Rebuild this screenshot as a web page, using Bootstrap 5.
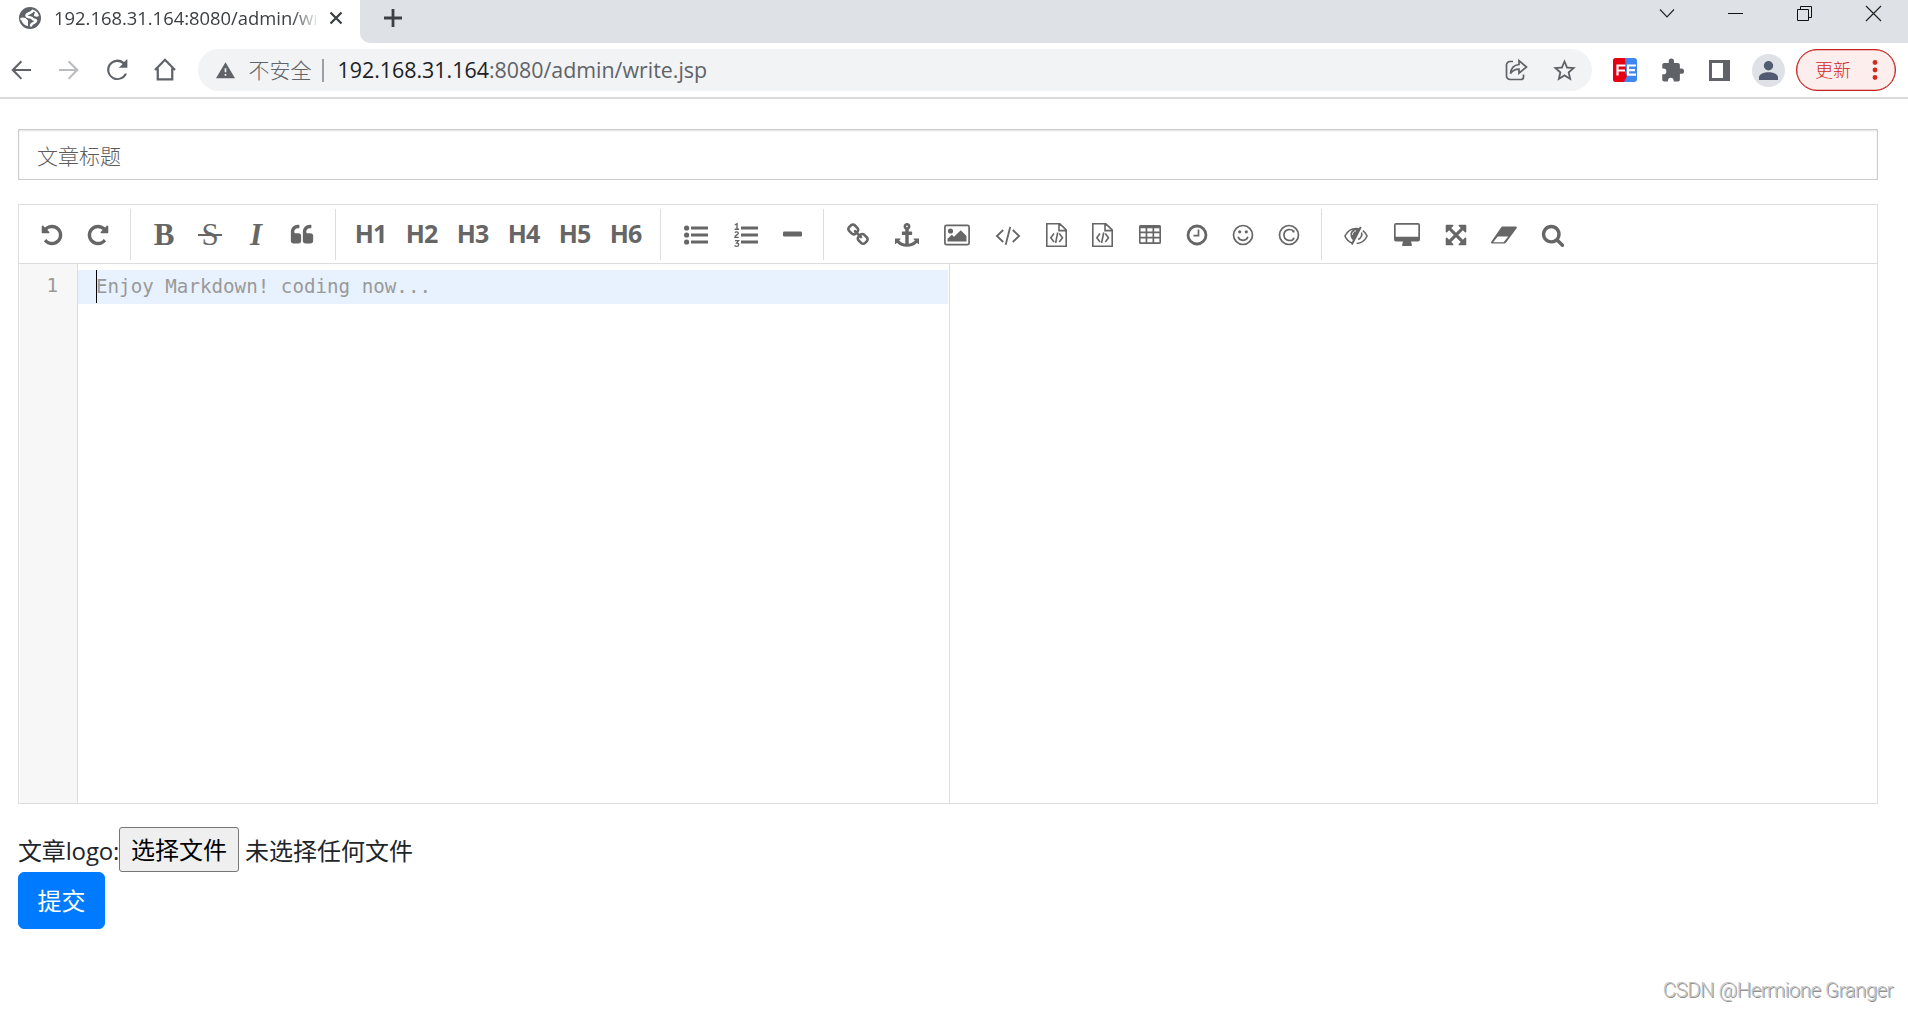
<!DOCTYPE html>
<html lang="zh-CN">
<head>
<meta charset="utf-8">
<meta name="viewport" content="width=device-width, initial-scale=1">
<title>192.168.31.164:8080/admin/write.jsp</title>
<link href="https://cdn.jsdelivr.net/npm/bootstrap@5.3.0/dist/css/bootstrap.min.css" rel="stylesheet">
<style>
  body { font-family: "Open Sans", "Noto Sans CJK SC", sans-serif; color: #212529; background: #fff; height: 1010px; overflow: hidden; font-size: 24px; }
  svg { display: block; flex: none; overflow: visible; }
  .tabstrip { height: 43px; background: #fff; }
  .tab-active { width: 360px; height: 36px; padding-left: 18px; }
  .tab-title { width: 262px; margin-left: 12px; font-size: 18.4px; color: #3c4043; white-space: nowrap; overflow: hidden; line-height: 36px;
    -webkit-mask-image: linear-gradient(90deg, #000 238px, transparent 266px); mask-image: linear-gradient(90deg, #000 238px, transparent 266px); }
  .tab-close { margin-left: 9px; }
  .tab-rest { background: #dee1e6; border-bottom-left-radius: 10px; padding-left: 24px; }
  .win-btn { width: 69px; height: 27px; }
  .navrow { height: 56px; border-bottom: 2px solid #d9dadc; padding-left: 6px; padding-right: 12px; color: #5f6368; }
  .nav-icons { gap: 18px; margin-right: 18px; }
  .omnibox { height: 42px; border-radius: 21px; background: #f1f3f4; padding: 0 15px 0 18px; width: 1394px; flex: none; font-size: 21px; line-height: 42px; }
  .insecure { margin-left: 13.5px; }
  .omni-sep { width: 2px; height: 23px; background: #9aa0a6; margin: 0 14px 0 10px; }
  .host { color: #202124; }
  .url { font-size: 21.4px; }
  .ext-area { padding-left: 21px; }
  .ext-puzzle { margin: 0 24px 0 22px; }
  .avatar { width: 33px; height: 33px; border-radius: 50%; background: #dee1e6; margin: 0 11px 0 22px; }
  .update-pill { width: 100px; height: 42px; border: 1px solid #c5221f; border-radius: 21px; background: #fceeed; color: #d12a22; font-size: 18px; padding-left: 18px; padding-right: 17px; box-shadow: inset 0 0 0 .3px #c5221f; }
  .page-main { padding: 30px 30px 0 18px; }
  .title-input { height: 51px; width: 1860px; border: 1px solid #ccc; border-radius: 0; font-size: 21px; padding: 2px 18px 0; box-shadow: inset 0 1px 2px rgba(0,0,0,.12); }
  .title-input::placeholder { color: #5c5c5c; opacity: 1; font-weight: 300; }
  .md-editor { width: 1860px; height: 600px; margin-top: 24px; border: 1px solid #ddd; }
  .md-toolbar { height: 59px; border-bottom: 1px solid #ddd; color: #666; padding-top: 4px; }
  .tool-group { height: 51px; border-right: 1px solid #ddd; padding: 0 9px 0 10px; }
  .tool-group:last-child { border: 0; }
  .tool-marks { padding-right: 10px; }
  .tool-heads { padding-left: 9px; }
  .tool { display: flex; align-items: center; justify-content: center; height: 50px; padding-top: 1px; }
  .w43 { width: 43px; } .w46 { width: 46px; } .w48 { width: 48px; } .w49 { width: 49px; } .w50 { width: 50px; } .w51 { width: 51px; } .w54 { width: 54px; }
  .head-tool { font-weight: 700; font-size: 25px; letter-spacing: -.9px; line-height: 1; padding: 0 0 1px; }
  .serif-tool { font-family: "Liberation Serif", serif; font-size: 31px; line-height: 1; font-weight: 700; padding: 0; }
  .strike-tool { font-weight: 400; position: relative; }
  .strike-tool::after { content: ""; position: absolute; left: 11px; right: 11px; top: 25px; height: 2px; background: #666; }
  .md-code { font-family: "DejaVu Sans Mono", monospace; font-size: 19.2px; color: #999; }
  .md-gutter { width: 59px; background: #f7f7f7; border-right: 1px solid #ddd; padding: 5px 19px 0 0; line-height: 34px; border-left: 1px solid #fff; }
  .md-pane { width: 872px; padding: 6px 1px 0 0; border-right: 1px solid #ddd; }
  .md-line { height: 34px; line-height: 34px; background: #e8f2ff; padding-left: 18px; letter-spacing: 0; white-space: pre; }
  .caret { width: 1px; height: 33px; background: #000; margin-right: -1px; }
  .logo-row { margin-top: 23px; height: 45px; line-height: 45px; font-size: 24px; }
  .logo-label { width: 101px; white-space: nowrap; padding-top: 1px; letter-spacing: -.15px; }
  .file-btn { width: 120px; height: 45px; border: 1px solid #767676; border-radius: 3px; background: #efefef; color: #000; line-height: 43px; padding: 0; font-size: 24px; }
  .file-state { margin-left: 6px; padding-top: 1px; }
  .submit-btn { --bs-btn-bg: #007bff; --bs-btn-border-color: #007bff; width: 87px; height: 57px; font-size: 24px; border-radius: 6px; padding: 1px 0 0; display: block; }
  .stamp { position: absolute; right: 15px; top: 975px; font: 300 20.4px/30px Roboto, "Liberation Sans", sans-serif; letter-spacing: -.48px; color: #c4c4c4; text-shadow: 1px 1px 0 #8f8f8f; white-space: nowrap; }
</style>
<script src="https://cdn.jsdelivr.net/npm/bootstrap@5.3.0/dist/js/bootstrap.bundle.min.js"></script>
</head>
<body>
<header>
  <div class="tabstrip d-flex">
    <div class="tab-active d-flex align-items-center">
      <svg width="24" height="24" viewBox="0 0 24 24"><circle cx="12" cy="12" r="11" fill="#5f6368"/><path d="M14.500 5c-1 2.500-6 2-6 4.500 0 2.400 5.500 1 6 3.300.3 1.500 3.500.2 3.500 2 0 2.200-4.500 2-5 4.700M3.500 13c2.500-.5 4 .3 5 1.700" fill="none" stroke="#fff" stroke-width="2.600" stroke-linecap="round"/><path fill="#fff" d="M14 3.500c3.500.5 6.300 3.200 7 6.500-1.500 1-4.500 1-5-.5-.4-1.300 1-2 1-3-.2-1-3-1-3-3zM3.200 12.500h4.500l2.300 2.500v5C6.500 19.500 3.300 16.500 3.200 12.500z"/></svg>
      <div class="tab-title">192.168.31.164:8080/admin/write.jsp</div>
      <svg class="tab-close" width="22" height="22" viewBox="0 0 22 22"><path d="M5.500 5.500l11 11m0-11l-11 11" stroke="#3c4043" stroke-width="2.300"/></svg>
    </div>
    <div class="tab-rest flex-grow-1 d-flex justify-content-between">
      <svg width="18" height="36" viewBox="0 0 18 36"><path d="M9 9v18M0 18h18" stroke="#3c4043" stroke-width="2.800"/></svg>
      <div class="d-flex">
        <div class="win-btn"><svg width="69" height="27" viewBox="0 0 69 27"><path d="M28 9.500l7 7.500 7-7.500" fill="none" stroke="#222" stroke-width="1.100"/></svg></div>
        <div class="win-btn"><svg width="69" height="27" viewBox="0 0 69 27"><path d="M27 13.500h15" stroke="#111"/></svg></div>
        <div class="win-btn"><svg width="69" height="27" viewBox="0 0 69 27"><path d="M27.500 9.500h11v11h-11zM30.500 9.500v-3h11v11h-3" fill="none" stroke="#111"/></svg></div>
        <div class="win-btn"><svg width="69" height="27" viewBox="0 0 69 27"><path d="M27 6l15 15m0-15L27 21" stroke="#222" stroke-width="1.200"/></svg></div>
      </div>
    </div>
  </div>
  <div class="navrow d-flex align-items-center">
    <div class="nav-icons d-flex">
      <svg width="30" height="30" viewBox="0 0 24 24" fill="currentColor"><path d="M20 11.200H7.500l5.400-5.700L11.800 4.400 4.200 12l7.600 7.600 1.100-1.100-5.400-5.700H20z"/></svg>
      <svg width="30" height="30" viewBox="0 0 24 24" fill="#babcbe"><path d="M4 11.200h12.500l-5.400-5.700 1.100-1.100 7.600 7.600-7.600 7.600-1.100-1.100 5.400-5.700H4z"/></svg>
      <svg width="30" height="30" viewBox="0 0 24 24" fill="currentColor"><path d="M17.650 5.600A8.200 8.200 0 1 0 20 14.700h-1.800a6.500 6.500 0 1 1-1.700-7.600L13.500 10.200H20.300V3.200z"/></svg>
      <svg width="30" height="30" viewBox="0 0 24 24" fill="none" stroke="currentColor" stroke-width="1.800"><path d="M4 12L12 3.800 20 12M6.200 10.500v9h11.600v-9" stroke-linejoin="miter"/></svg>
    </div>
    <div class="omnibox d-flex align-items-center">
      <svg width="19" height="19" viewBox="0 1.500 22 20" fill="currentColor"><path d="M0 20.500h22L11 2 0 20.500zm12-3h-2v-2h2v2zm0-4h-2V9h2v4.500z"/></svg>
      <span class="insecure fw-light">不安全</span><span class="omni-sep"></span>
      <span class="url flex-grow-1"><span class="host">192.168.31.164</span>:8080/admin/write.jsp</span>
      <svg width="24" height="24" viewBox="0 0 24 24" fill="none" stroke="currentColor" stroke-width="1.700"><path d="M9 3.500H6a3.500 3.500 0 0 0-3.500 3.500v11A3.500 3.500 0 0 0 6 21.500h11a2.500 2.500 0 0 0 2.500-2.500v-2.500M6.500 15.500c.5-5.500 3.500-8.500 8.500-9V2.500l7.500 6.500-7.500 6.200v-4c-4 0-6.500 1.300-8.500 4.300z"/></svg>
      <svg class="ms-4" width="25" height="25" viewBox="1 1 22 22" fill="currentColor"><path d="M22 9.240l-7.190-.62L12 2 9.190 8.630 2 9.240l5.460 4.730L5.820 21 12 17.270 18.180 21l-1.630-7.030L22 9.240zM12 15.400l-3.760 2.270 1-4.280-3.320-2.880 4.380-.38L12 6.100l1.710 4.040 4.380.38-3.320 2.880 1 4.280L12 15.400z"/></svg>
    </div>
    <div class="ext-area flex-grow-1 d-flex align-items-center">
      <svg width="24" height="24" viewBox="0 0 24 24"><rect width="24" height="24" rx="3" fill="#3f87f0"/><path d="M3 0h9l1 12-1 2 2 4-3 6H3a3 3 0 0 1-3-3V3a3 3 0 0 1 3-3z" fill="#e60012"/><path d="M12.500 7.500H4.500v10M5 12.500h7M23 7.500h-8v9.200h8M15 12.200h7" fill="none" stroke="#fff" stroke-width="2.200"/></svg>
      <svg class="ext-puzzle" width="26" height="26" viewBox="0 0 26 26" fill="currentColor"><path transform="translate(.3 .2) scale(.98)" d="M22.500 11.500H21V8c0-1.100-.9-2-2-2h-4V4a2.700 2.700 0 0 0-5.400 0v2H5C3.900 6 3 6.900 3 8v3.500h1.200a3 3 0 0 1 0 6H3V22.800c0 1.100.9 2 2 2h3.800v-1.300a3 3 0 0 1 5.900 0v1.300H19c1.100 0 2-.9 2-2V17h1.500a2.700 2.700 0 0 0 0-5.500z"/></svg>
      <svg width="21" height="21" viewBox="0 0 21 21"><path fill-rule="evenodd" fill="currentColor" d="M0 0h21v21H0zM3 3v15h11V3z"/></svg>
      <div class="avatar d-flex align-items-center justify-content-center"><svg width="19" height="19" viewBox="0 0 19 19" fill="#515c72"><circle cx="9.500" cy="4.700" r="4.700"/><path d="M0 19v-2.500C0 13 5 11.200 9.500 11.200S19 13 19 16.500V19z"/></svg></div>
      <div class="update-pill d-flex align-items-center justify-content-between"><span class="fw-light">更新</span><svg width="6" height="22" viewBox="0 0 6 22" fill="currentColor"><circle cx="3" cy="3.500" r="2.400"/><circle cx="3" cy="11" r="2.400"/><circle cx="3" cy="18.500" r="2.400"/></svg></div>
    </div>
  </div>
</header>

<main class="page-main">
  <input class="form-control title-input" type="text" placeholder="文章标题">
  <section class="md-editor d-flex flex-column">
    <div class="md-toolbar d-flex">
      <div class="tool-group d-flex">
        <span class="tool w46"><svg width="24" height="24" viewBox="0 0 1792 1792" fill="currentColor"><path d="M1664 896q0 156-61 298t-164 245-245 164-298 61q-172 0-327-72.500t-264-204.500q-7-10-6.500-22.500t8.500-20.500l137-138q10-9 25-9 16 2 23 12 73 95 179 147t225 52q104 0 198.500-40.500t163.500-109.500 109.500-163.500 40.500-198.500-40.500-198.500-109.500-163.500-163.500-109.500-198.500-40.500q-98 0-188 35.500t-160 101.500l137 138q31 30 14 69-17 40-59 40h-448q-26 0-45-19t-19-45v-448q0-42 40-59 39-17 69 14l130 129q107-101 244.500-156.500t284.500-55.500q156 0 298 61t245 164 164 245 61 298z"/></svg></span>
        <span class="tool w46"><svg width="24" height="24" viewBox="0 0 1792 1792" fill="currentColor"><path d="M1664 256v448q0 26-19 45t-45 19h-448q-42 0-59-40-17-39 14-69l138-138q-148-137-349-137-104 0-198.500 40.500t-163.500 109.500-109.500 163.500-40.500 198.500 40.500 198.500 109.500 163.500 163.500 109.500 198.500 40.500q119 0 225-52t179-147q7-10 23-12 15 0 25 9l137 137q9 8 9.500 20.500t-7.500 22.500q-109 132-264 204.500t-327 72.500q-156 0-298-61t-245-164-164-245-61-298 61-298 164-245 245-164 298-61q147 0 284.500 55.500t244.500 156.500l130-129q29-31 70-14 39 17 39 59z"/></svg></span>
      </div>
      <div class="tool-group tool-marks d-flex">
        <span class="tool w46 serif-tool">B</span>
        <span class="tool w46 serif-tool strike-tool">S</span>
        <span class="tool w46 serif-tool fst-italic">I</span>
        <span class="tool w46"><svg width="24" height="24" viewBox="0 0 1792 1792" fill="currentColor"><path d="M832 960v384q0 80-56 136t-136 56h-384q-80 0-136-56t-56-136v-704q0-104 40.500-198.500t109.500-163.500 163.500-109.500 198.500-40.500h64q26 0 45 19t19 45v128q0 26-19 45t-45 19h-64q-106 0-181 75t-75 181v32q0 40 28 68t68 28h224q80 0 136 56t56 136zm896 0v384q0 80-56 136t-136 56h-384q-80 0-136-56t-56-136v-704q0-104 40.500-198.500t109.500-163.500 163.500-109.500 198.500-40.500h64q26 0 45 19t19 45v128q0 26-19 45t-45 19h-64q-106 0-181 75t-75 181v32q0 40 28 68t68 28h224q80 0 136 56t56 136z"/></svg></span>
      </div>
      <div class="tool-group tool-heads d-flex">
        <span class="tool w51 head-tool">H1</span><span class="tool w51 head-tool">H2</span><span class="tool w51 head-tool">H3</span><span class="tool w51 head-tool">H4</span><span class="tool w51 head-tool">H5</span><span class="tool w51 head-tool">H6</span>
      </div>
      <div class="tool-group d-flex">
        <span class="tool w50"><svg width="24" height="24" viewBox="0 0 24 24" fill="currentColor"><circle cx="2.600" cy="5" r="2.600"/><circle cx="2.600" cy="12" r="2.600"/><circle cx="2.600" cy="19" r="2.600"/><path d="M7 3.500h17v3H7zM7 10.500h17v3H7zM7 17.500h17v3H7z"/></svg></span>
        <span class="tool w50"><svg width="24" height="24" viewBox="0 0 24 24" fill="currentColor"><path d="M7 3.500h17v3H7zM7 10.500h17v3H7zM7 17.500h17v3H7z"/><path d="M.8 2L3 .7V6M.6 6.300h4.500M.8 9.600c.8-1 3.500-1.100 3.500.6C4.300 11.500.9 12.500.9 14.400h3.900M1 17.600h3.500L2.700 20c3 0 2.400 3.600-.2 3.400-.8 0-1.500-.3-2-.8" fill="none" stroke="currentColor" stroke-width="1.400"/></svg></span>
        <span class="tool w43"><svg width="19" height="24" viewBox="0 0 19 24" fill="currentColor"><rect y="8.500" width="19" height="5" rx="1.200"/></svg></span>
      </div>
      <div class="tool-group d-flex">
        <span class="tool w48"><svg width="24" height="24" viewBox="0 0 1792 1792" fill="currentColor"><path d="M1520 1216q0-40-28-68l-208-208q-28-28-68-28-42 0-72 32 3 3 19 18.500t21.500 21.500 15 19 13 25.500 3.500 27.500q0 40-28 68t-68 28q-15 0-27.500-3.500t-25.500-13-19-15-21.500-21.500-18.500-19q-33 31-33 73 0 40 28 68l206 207q27 27 68 27 40 0 68-26l147-146q28-28 28-67zm-703-705q0-40-28-68l-206-207q-28-28-68-28-39 0-68 27l-147 146q-28 28-28 67 0 40 28 68l208 208q27 27 68 27 42 0 72-31-3-3-19-18.500t-21.500-21.500-15-19-13-25.500-3.500-27.500q0-40 28-68t68-28q15 0 27.500 3.500t25.500 13 19 15 21.500 21.500 18.500 19q33-31 33-73zm895 705q0 120-85 203l-147 146q-83 83-203 83-121 0-204-85l-206-207q-83-83-83-203 0-123 88-209l-88-88q-86 88-208 88-120 0-204-84l-208-208q-84-84-84-204t85-203l147-146q83-83 203-83 121 0 204 85l206 207q83 83 83 203 0 123-88 209l88 88q86-88 208-88 120 0 204 84l208 208q84 84 84 204z"/></svg></span>
        <span class="tool w50"><svg width="24" height="24" viewBox="0 0 1792 1792" fill="currentColor"><path d="M960 256q0-26-19-45t-45-19-45 19-19 45 19 45 45 19 45-19 19-45zm832 928v352q0 22-20 30-8 2-12 2-13 0-23-9l-93-93q-119 143-318.500 226.500t-429.500 83.500-429.500-83.500-318.500-226.500l-93 93q-9 9-23 9-4 0-12-2-20-8-20-30v-352q0-14 9-23t23-9h352q22 0 30 20 8 19-7 35l-100 100q67 91 189.500 153.500t271.500 82.500v-647h-192q-26 0-45-19t-19-45v-128q0-26 19-45t45-19h192v-163q-58-34-93-92.500t-35-128.500q0-106 75-181t181-75 181 75 75 181q0 70-35 128.500t-93 92.500v163h192q26 0 45 19t19 45v128q0 26-19 45t-45 19h-192v647q149-20 271.500-82.500t189.500-153.500l-100-100q-15-16-7-35 8-20 30-20h352q14 0 23 9t9 23z"/></svg></span>
        <span class="tool w50"><svg width="26" height="24" viewBox="0 0 26 24" fill="currentColor"><rect x=".9" y="2.400" width="24.200" height="19.200" rx="1.500" fill="none" stroke="currentColor" stroke-width="1.700"/><circle cx="6.500" cy="8" r="2.600"/><path d="M3.500 18.500v-2.800l4.300-4 2.200 2.100 6.800-6.500 5.700 5.600v5.600z"/></svg></span>
        <span class="tool w51"><svg width="26" height="24" viewBox="0 0 26 24" fill="none" stroke="currentColor" stroke-width="1.800"><path d="M8.200 7l-6.300 6 6.300 6M17.800 7l6.300 6-6.300 6M15.200 4l-4.500 17.800"/></svg></span>
        <span class="tool w46"><svg width="21" height="24" viewBox="0 0 21 24" fill="none" stroke="currentColor" stroke-width="1.600"><path d="M.8.8h13l6.400 6v16.400H.8zM13 .8v6.800h7.200M8 10.500l-3.200 4.200L8 19M13.300 10.500l3.200 4.200-3.200 4.300M11.700 9.500L9.600 20"/></svg></span>
        <span class="tool w46"><svg width="21" height="24" viewBox="0 0 21 24" fill="none" stroke="currentColor" stroke-width="1.600"><path d="M.8.8h13l6.400 6v16.400H.8zM13 .8v6.800h7.200M8 10.500l-3.200 4.200L8 19M13.300 10.500l3.200 4.200-3.200 4.300M11.700 9.500L9.600 20"/></svg></span>
        <span class="tool w49"><svg width="22" height="24" viewBox="0 0 22 24"><path fill="currentColor" fill-rule="evenodd" d="M1.500 2h19A1.500 1.500 0 0 1 22 3.500v16a1.500 1.500 0 0 1-1.500 1.500h-19A1.500 1.500 0 0 1 0 19.500v-16A1.500 1.500 0 0 1 1.500 2zM1.600 5.200v3.300h5V5.200zM8.300 5.200v3.300h5.200V5.200zM15.200 5.200v3.300h5.200V5.200zM1.600 10.200v3.500h5v-3.500zM8.300 10.200v3.500h5.200v-3.500zM15.200 10.200v3.500h5.200v-3.500zM1.600 15.500v3.700h5v-3.700zM8.300 15.500v3.700h5.200v-3.700zM15.200 15.500v3.700h5.200v-3.700z"/></svg></span>
        <span class="tool w46"><svg width="22" height="24" viewBox="0 0 22 24" fill="none" stroke="currentColor"><circle cx="11" cy="12" r="9" stroke-width="2.800"/><path d="M12.500 6.500v6.200H7.500" stroke-width="1.700"/></svg></span>
        <span class="tool w46"><svg width="22" height="24" viewBox="0 0 22 24" fill="none" stroke="currentColor" stroke-width="1.700"><circle cx="11" cy="12" r="9.500"/><path d="M6.300 14.300c1.300 4 8.100 4 9.400 0" stroke-linecap="round"/><g fill="currentColor" stroke="none"><circle cx="7.700" cy="8.800" r="1.600"/><circle cx="14.300" cy="8.800" r="1.600"/></g></svg></span>
        <span class="tool w46"><svg width="22" height="24" viewBox="0 0 22 24" fill="none" stroke="currentColor" stroke-width="1.700"><circle cx="11" cy="12" r="9.500"/><path d="M15.700 9.400V7.300M15.700 9.400C14.800 5 6 5.600 6 12s8.800 7 10 2.700" /></svg></span>
      </div>
      <div class="tool-group d-flex">
        <span class="tool w48"><svg width="24" height="24" viewBox="0 0 24 24" fill="none" stroke="currentColor" stroke-width="1.600"><path d="M8 20C5 18.800 2.500 16.700.9 13 3.500 8 7.500 5.500 12 5.500c1.500 0 2.800.2 4 .7M18.800 7.700c1.800 1.200 3.300 3 4.300 5.300-2.200 4.700-5.800 7.200-10.500 7.500M17.500 9.500c1 2.500-.5 5.800-3.300 7"/><path d="M16.800 4L7.800 21.500" stroke-width="2"/><path d="M16 5.500C10 4 6 8 6.500 12c.2 2.500 1.200 4 2.700 5.500z" fill="currentColor" stroke="none"/><path d="M8.500 11.800c0-2.200 1.300-3.700 3.500-4" stroke="#fff" stroke-width="1"/></svg></span>
        <span class="tool w54"><svg width="26" height="24" viewBox="0 0 26 24"><path fill="currentColor" fill-rule="evenodd" d="M2 0h22a2 2 0 0 1 2 2v14.500a2 2 0 0 1-2 2h-7l.8 3v1.500H8.200v-1.500l.8-3H2a2 2 0 0 1-2-2V2a2 2 0 0 1 2-2zM1.700 1.700v12h22.600v-12z"/></svg></span>
        <span class="tool w43"><svg width="24" height="24" viewBox="0 0 1792 1792" fill="currentColor"><path d="M1411 541l-355 355 355 355 144-144q29-31 70-14 39 17 39 59v448q0 26-19 45t-45 19h-448q-42 0-59-40-17-39 14-69l144-144-355-355-355 355 144 144q31 30 14 69-17 40-59 40h-448q-26 0-45-19t-19-45v-448q0-42 40-59 39-17 69 14l144 144 355-355-355-355-144 144q-19 19-45 19-12 0-24-5-40-17-40-59v-448q0-26 19-45t45-19h448q42 0 59 40 17 39-14 69l-144 144 355 355 355-355-144-144q-31-30-14-69 17-40 59-40h448q26 0 45 19t19 45v448q0 42-39 59-13 5-25 5-26 0-45-19z"/></svg></span>
        <span class="tool w54"><svg width="26" height="24" viewBox="0 0 26 24"><path fill="currentColor" fill-rule="evenodd" d="M11.500 3.500h13.200c1 0 1.500 1 .9 1.800L14.900 19.800c-.4.500-.8.700-1.400.7H1.200c-1 0-1.500-1-.9-1.800L10.200 4.200c.4-.5.700-.7 1.300-.7zM6.800 13.500L2.200 19.200h10.400l4.600-5.700z"/></svg></span>
        <span class="tool w43"><svg width="24" height="24" viewBox="0 0 1792 1792" fill="currentColor"><path d="M1216 832q0-185-131.500-316.500t-316.500-131.500-316.500 131.500-131.500 316.500 131.500 316.500 316.500 131.500 316.500-131.500 131.500-316.500zm512 832q0 52-38 90t-90 38q-54 0-90-38l-343-342q-179 124-399 124-143 0-273.500-55.500t-225-150-150-225-55.500-273.500 55.500-273.500 150-225 225-150 273.500-55.500 273.500 55.500 225 150 150 225 55.500 273.500q0 220-124 399l343 343q37 37 37 90z"/></svg></span>
      </div>
    </div>
    <div class="flex-grow-1 d-flex md-code">
      <div class="md-gutter text-end">1</div>
      <div class="md-pane">
        <div class="md-line d-flex"><span class="caret"></span><span>Enjoy Markdown! coding now...</span></div>
      </div>
    </div>
  </section>
  <div class="logo-row d-flex">
    <span class="logo-label">文章logo:</span>
    <button type="button" class="file-btn">选择文件</button>
    <span class="file-state">未选择任何文件</span>
  </div>
  <button type="submit" class="btn btn-primary submit-btn">提交</button>
</main>
<div class="stamp">CSDN @Hermione Granger</div>
</body>
</html>
